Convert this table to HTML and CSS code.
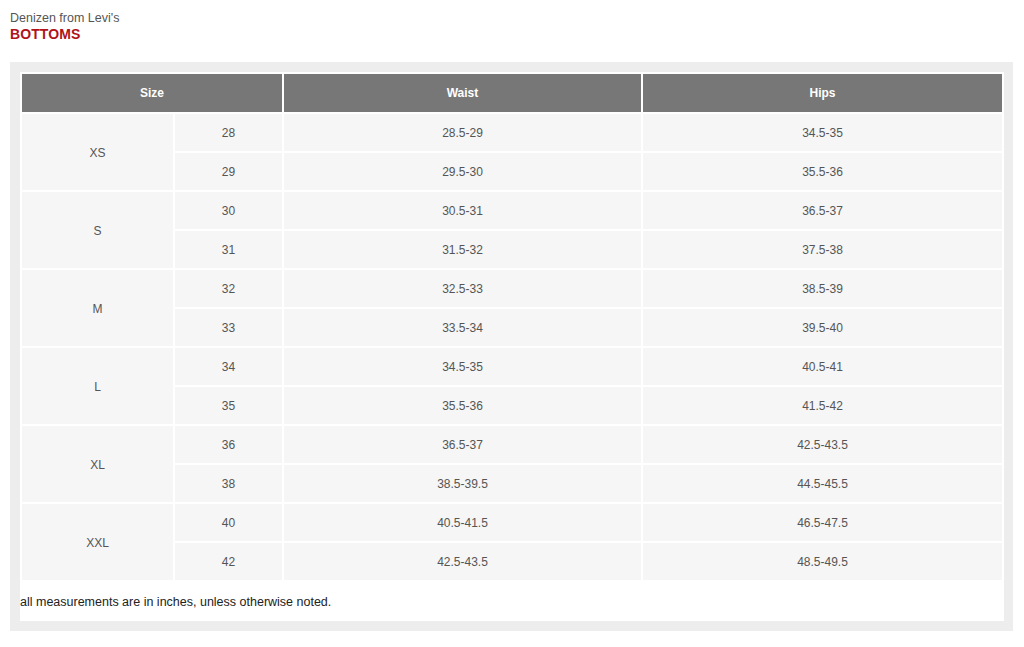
FILE: index.html
```html
<!DOCTYPE html>
<html>
<head>
<meta charset="utf-8">
<title>Denizen from Levi's - Bottoms</title>
<link rel="stylesheet" href="styles.css">
</head>
<body>
<div class="page">
  <div class="brand">Denizen from Levi's</div>
  <div class="category">BOTTOMS</div>
  <div class="chart">
    <div class="panel">
      <table class="sizes">
        <colgroup>
          <col class="c-size"><col class="c-num"><col class="c-waist"><col class="c-hips">
        </colgroup>
        <thead>
          <tr><th colspan="2">Size</th><th>Waist</th><th>Hips</th></tr>
        </thead>
        <tbody>
          <tr><td rowspan="2">XS</td><td>28</td><td>28.5-29</td><td>34.5-35</td></tr>
          <tr><td>29</td><td>29.5-30</td><td>35.5-36</td></tr>
          <tr><td rowspan="2">S</td><td>30</td><td>30.5-31</td><td>36.5-37</td></tr>
          <tr><td>31</td><td>31.5-32</td><td>37.5-38</td></tr>
          <tr><td rowspan="2">M</td><td>32</td><td>32.5-33</td><td>38.5-39</td></tr>
          <tr><td>33</td><td>33.5-34</td><td>39.5-40</td></tr>
          <tr><td rowspan="2">L</td><td>34</td><td>34.5-35</td><td>40.5-41</td></tr>
          <tr><td>35</td><td>35.5-36</td><td>41.5-42</td></tr>
          <tr><td rowspan="2">XL</td><td>36</td><td>36.5-37</td><td>42.5-43.5</td></tr>
          <tr><td>38</td><td>38.5-39.5</td><td>44.5-45.5</td></tr>
          <tr><td rowspan="2">XXL</td><td>40</td><td>40.5-41.5</td><td>46.5-47.5</td></tr>
          <tr><td>42</td><td>42.5-43.5</td><td>48.5-49.5</td></tr>
        </tbody>
      </table>
      <p class="note">all measurements are in inches, unless otherwise noted.</p>
    </div>
  </div>
</div>
</body>
</html>
```

FILE: styles.css
```css
html, body {
  margin: 0;
  padding: 0;
  background: #fff;
}
.page {
  padding: 11px 11px 0 10px;
  font-family: "Liberation Sans", Arial, sans-serif;
}
.brand {
  font-size: 12.5px;
  line-height: 15px;
  color: #555;
}
.category {
  font-size: 14px;
  line-height: 16px;
  font-weight: bold;
  color: #b0121b;
  letter-spacing: 0.1px;
}
.chart {
  margin-top: 20px;
  background: #ededed;
  padding: 10px 9px 10px 10px;
}
.panel {
  background: #fff;
}
.sizes {
  width: 100%;
  border-collapse: separate;
  border-spacing: 2px;
  table-layout: fixed;
}
.c-size { width: 151px; }
.c-num { width: 107px; }
.c-waist { width: 357px; }
.c-hips { width: auto; }
.sizes th {
  background: #777;
  color: #fff;
  font-size: 12px;
  font-weight: bold;
  height: 38px;
  padding: 0;
  text-align: center;
  vertical-align: middle;
}
.sizes td {
  background: #f6f6f6;
  color: #555;
  font-size: 12px;
  height: 36px;
  padding: 1px 0 0;
  text-align: center;
  vertical-align: middle;
}
.note {
  margin: 0;
  padding: 12px 0 11px;
  font-size: 12.5px;
  line-height: 16px;
  color: #222;
}
```
